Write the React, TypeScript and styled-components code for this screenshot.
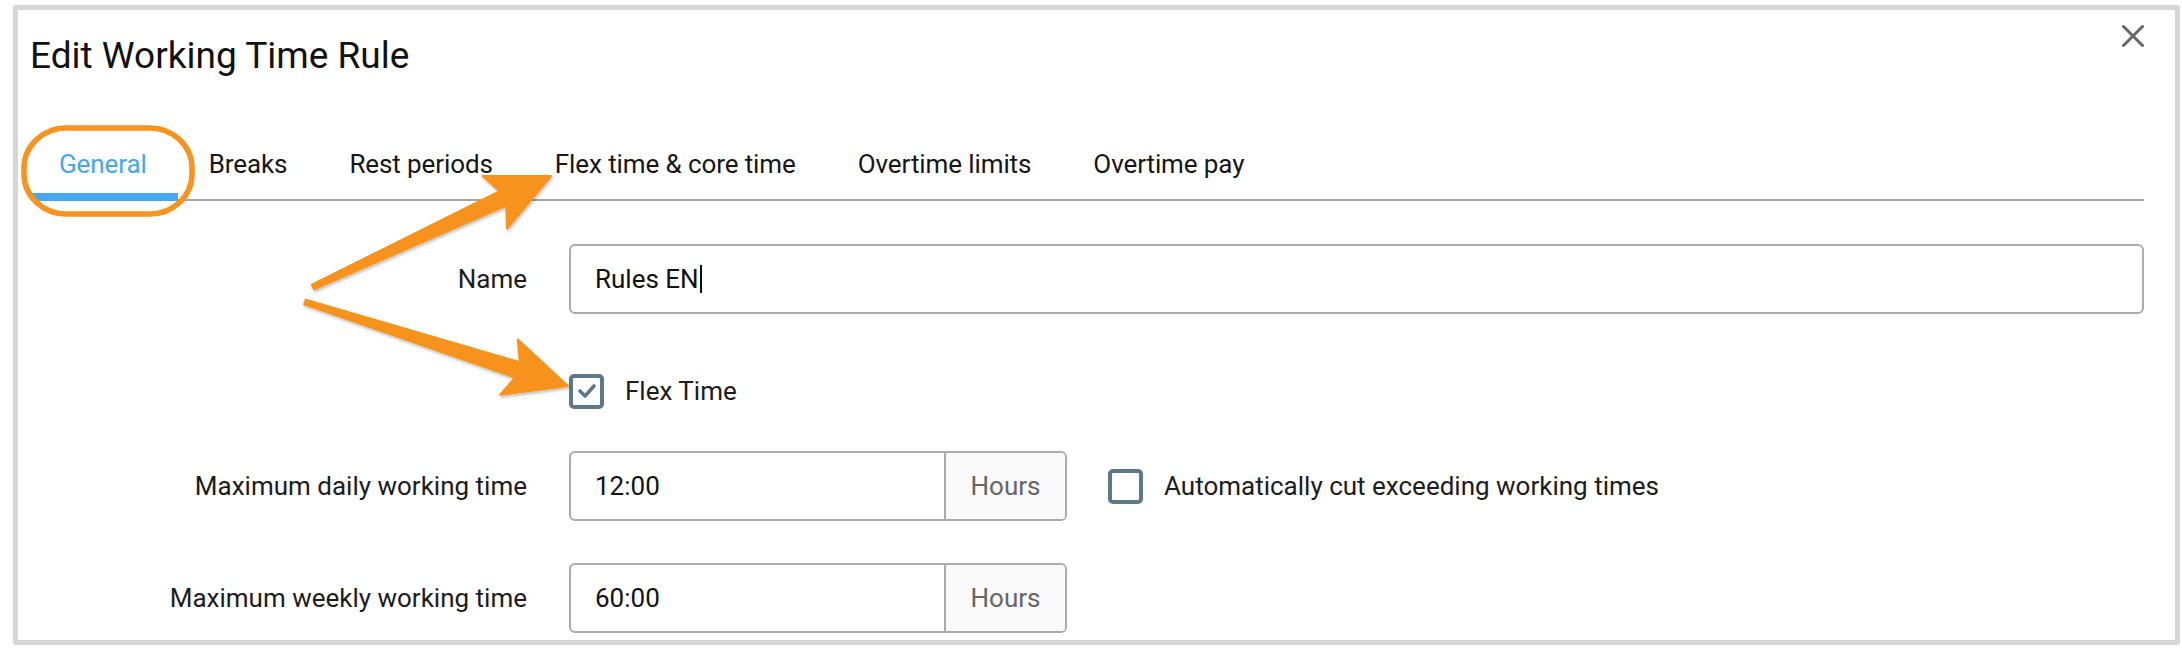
import React from 'react';
import styled, { createGlobalStyle } from 'styled-components';

const GlobalStyle = createGlobalStyle`
  html, body {
    margin: 0;
    padding: 0;
    background: #ffffff;
  }
  body {
    font-family: Roboto, 'Liberation Sans', Arial, sans-serif;
    color: #1c1c1c;
    overflow: hidden;
  }
`;

const Page = styled.div`
  position: relative;
  width: 2182px;
  height: 656px;
  padding: 5px 2px 0 13px;
  box-sizing: border-box;
  overflow: hidden;
`;

const Dialog = styled.div`
  height: 640px;
  box-sizing: border-box;
  border: 5px solid #d6d6d6;
  border-radius: 3px;
  padding: 0 31px 0 13px;
  background: #fff;
  overflow: hidden;
`;

const Header = styled.div`
  display: flex;
  justify-content: space-between;
  align-items: flex-start;
  padding-top: 15px;
`;

const Title = styled.h1`
  margin: 10px 0 0 -1px;
  font-size: 37px;
  line-height: 42px;
  font-weight: 400;
  color: #111;
`;

const CloseButton = styled.button`
  width: 22px;
  height: 22px;
  padding: 0;
  border: none;
  background: none;
  display: flex;
  cursor: pointer;
`;

const TabList = styled.div`
  display: flex;
  margin-top: 54px;
  border-bottom: 2px solid #a6a6a6;
`;

const Tab = styled.div<{ $active?: boolean }>`
  padding: 18px 31px 14px;
  margin-bottom: -2px;
  border-bottom: 8px solid ${p => (p.$active ? '#45a7f2' : 'transparent')};
  font-size: 26px;
  line-height: 30px;
  letter-spacing: -0.1px;
  color: ${p => (p.$active ? '#45a7f2' : '#161616')};
  white-space: nowrap;

  &:first-child {
    padding-left: 28px;
  }
`;

const Form = styled.div`
  margin-top: 43px;
`;

const Row = styled.div<{ $offset?: number }>`
  display: grid;
  grid-template-columns: 496px 1fr;
  column-gap: 42px;
  align-items: center;
  padding-top: ${p => p.$offset ?? 0}px;
  margin-bottom: 42px;
`;

const Label = styled.label`
  text-align: right;
  font-size: 26px;
  line-height: 30px;
  color: #1c1c1c;
  white-space: nowrap;
`;

const TextField = styled.div`
  height: 70px;
  box-sizing: border-box;
  border: 2px solid #ababab;
  border-radius: 6px;
  padding: 0 24px;
  display: flex;
  align-items: center;
  font-size: 26px;
  color: #111;
`;

const Caret = styled.span`
  display: inline-block;
  width: 2px;
  height: 28px;
  margin-left: 1px;
  background: #111;
`;

const Inline = styled.div`
  display: flex;
  align-items: center;
`;

const InputGroup = styled.div`
  width: 498px;
  height: 70px;
  box-sizing: border-box;
  display: flex;
  border: 2px solid #ababab;
  border-radius: 6px;
  overflow: hidden;
`;

const GroupInput = styled.div`
  flex: 1;
  padding: 0 24px;
  display: flex;
  align-items: center;
  font-size: 26px;
  color: #111;
`;

const Addon = styled.div`
  width: 119px;
  border-left: 2px solid #ababab;
  background: #fafafa;
  display: flex;
  align-items: center;
  justify-content: center;
  font-size: 26px;
  color: #666;
`;

const CheckRow = styled.label<{ $indent?: number }>`
  display: flex;
  align-items: center;
  gap: 21px;
  margin-left: ${p => p.$indent ?? 0}px;
  height: 36px;
  font-size: 26px;
  color: #1c1c1c;
  white-space: nowrap;
`;

const Box = styled.span`
  width: 35px;
  height: 35px;
  box-sizing: border-box;
  border: 4px solid #5d7987;
  border-radius: 5px;
  display: flex;
  align-items: center;
  justify-content: center;
`;

const Overlay = styled.svg`
  position: absolute;
  left: 0;
  top: 0;
  pointer-events: none;
`;

type Pt = [number, number];

function arrowPoints(tail: Pt, tip: Pt) {
  const dx = tip[0] - tail[0];
  const dy = tip[1] - tail[1];
  const len = Math.hypot(dx, dy);
  const d = [dx / len, dy / len];
  const n = [-d[1], d[0]];
  const at = (t: number, w: number): string =>
    `${(tip[0] - d[0] * t + n[0] * w).toFixed(1)},${(tip[1] - d[1] * t + n[1] * w).toFixed(1)}`;
  const head = 62;
  return [
    at(len, 2.5),
    at(head - 9, 8),
    at(head, 29),
    at(0, 0),
    at(head, -29),
    at(head - 9, -8),
    at(len, -2.5),
  ].join(' ');
}

function Checkbox({ checked }: { checked?: boolean }) {
  return (
    <Box>
      {checked && (
        <svg width="22" height="18" viewBox="0 0 22 18">
          <polyline points="4,9 9,14 18,4" fill="none" stroke="#5d7987" strokeWidth="3.6" strokeLinecap="round" strokeLinejoin="round" />
        </svg>
      )}
    </Box>
  );
}

const tabs = ['General', 'Breaks', 'Rest periods', 'Flex time & core time', 'Overtime limits', 'Overtime pay'];

export default function App() {
  return (
    <>
      <GlobalStyle />
      <Page>
        <Dialog>
          <Header>
            <Title>Edit Working Time Rule</Title>
            <CloseButton aria-label="Close">
              <svg width="22" height="22" viewBox="0 0 22 22">
                <path d="M1.5 1.5 L20.5 20.5 M20.5 1.5 L1.5 20.5" stroke="#666" strokeWidth="3" strokeLinecap="round" />
              </svg>
            </CloseButton>
          </Header>

          <TabList>
            {tabs.map((t, i) => (
              <Tab key={t} $active={i === 0}>{t}</Tab>
            ))}
          </TabList>

          <Form>
            <Row>
              <Label>Name</Label>
              <TextField>
                Rules EN<Caret />
              </TextField>
            </Row>
            <Row $offset={17}>
              <span />
              <CheckRow>
                <Checkbox checked />
                Flex Time
              </CheckRow>
            </Row>
            <Row>
              <Label>Maximum daily working time</Label>
              <Inline>
                <InputGroup>
                  <GroupInput>12:00</GroupInput>
                  <Addon>Hours</Addon>
                </InputGroup>
                <CheckRow $indent={41}>
                  <Checkbox />
                  Automatically cut exceeding working times
                </CheckRow>
              </Inline>
            </Row>
            <Row>
              <Label>Maximum weekly working time</Label>
              <Inline>
                <InputGroup>
                  <GroupInput>60:00</GroupInput>
                  <Addon>Hours</Addon>
                </InputGroup>
              </Inline>
            </Row>
          </Form>
        </Dialog>

        <Overlay width="2182" height="656" viewBox="0 0 2182 656">
          <defs>
            <filter id="shadow" x="-10%" y="-10%" width="120%" height="120%">
              <feDropShadow dx="1" dy="2" stdDeviation="1.5" floodColor="#000" floodOpacity="0.25" />
            </filter>
          </defs>
          <rect x="24" y="128" width="168" height="86" rx="42" ry="40" fill="none" stroke="#f7931e" strokeWidth="5.5" />
          <g fill="#f7931e" stroke="#f7931e" strokeWidth="2" strokeLinejoin="round" filter="url(#shadow)">
            <polygon points={arrowPoints([313, 287], [551, 176])} />
            <polygon points={arrowPoints([305, 302], [568, 386])} />
          </g>
        </Overlay>
      </Page>
    </>
  );
}
